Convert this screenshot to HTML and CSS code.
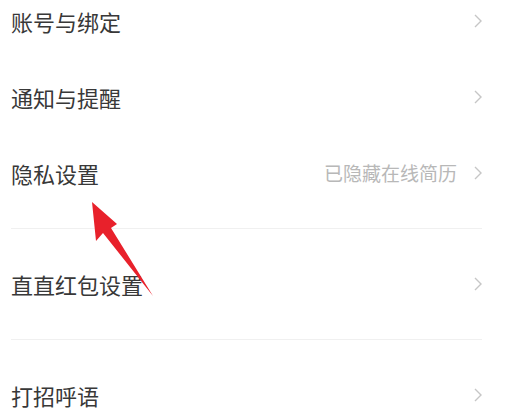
FILE: index.html
```html
<!DOCTYPE html>
<html lang="zh-CN">
<head>
<meta charset="utf-8">
<link rel="stylesheet" href="styles.css">
</head>
<body>
<div class="page">
  <div class="list">
    <div class="row r-first"><span class="label">账号与绑定</span><span class="right"><svg class="chev" viewBox="0 0 8 14"><path d="M1 1 L7 7 L1 13"/></svg></span></div>
    <div class="row"><span class="label">通知与提醒</span><span class="right"><svg class="chev" viewBox="0 0 8 14"><path d="M1 1 L7 7 L1 13"/></svg></span></div>
    <div class="row r-end"><span class="label">隐私设置</span><span class="right"><span class="value">已隐藏在线简历</span><svg class="chev" viewBox="0 0 8 14"><path d="M1 1 L7 7 L1 13"/></svg></span></div>
    <div class="divider"></div>
    <div class="row r-tall"><span class="label">直直红包设置</span><span class="right"><svg class="chev" viewBox="0 0 8 14"><path d="M1 1 L7 7 L1 13"/></svg></span></div>
    <div class="divider"></div>
    <div class="row r-tall"><span class="label">打招呼语</span><span class="right"><svg class="chev" viewBox="0 0 8 14"><path d="M1 1 L7 7 L1 13"/></svg></span></div>
  </div>
  <svg class="arrow" viewBox="0 0 511 415" width="511" height="415">
    <polygon points="92,202 117,224 111,228 153,296 103,233 96,241"/>
  </svg>
</div>
</body>
</html>
```
FILE: styles.css
```css
html, body {
  margin: 0;
  padding: 0;
  background: #ffffff;
  overflow: hidden;
}
.page {
  position: relative;
  width: 511px;
  height: 415px;
  overflow: hidden;
  font-family: "Noto Sans CJK SC", "Noto Sans", sans-serif;
}
.list {
  margin: -17px 29px 0 11px;
  display: flex;
  flex-direction: column;
}
.row {
  display: flex;
  align-items: center;
  justify-content: space-between;
  height: 76px;
}
.row.r-end {
  height: 93px;
  align-items: flex-start;
  padding-top: 27px;
  box-sizing: border-box;
}
.row.r-tall {
  height: 110px;
}
.label {
  font-size: 22px;
  line-height: 22px;
  color: #383838;
}
.right {
  display: flex;
  align-items: center;
  gap: 17px;
  height: 22px;
}
.value {
  font-size: 19px;
  line-height: 22px;
  color: #b8b8b8;
}
.chev {
  width: 8px;
  height: 14px;
  fill: none;
  stroke: #c6c6c6;
  stroke-width: 1.4;
}
.divider {
  height: 1px;
  background: #f0f0f0;
}
.arrow {
  position: absolute;
  left: 0;
  top: 0;
}
.arrow polygon {
  fill: #e8212b;
}
```
